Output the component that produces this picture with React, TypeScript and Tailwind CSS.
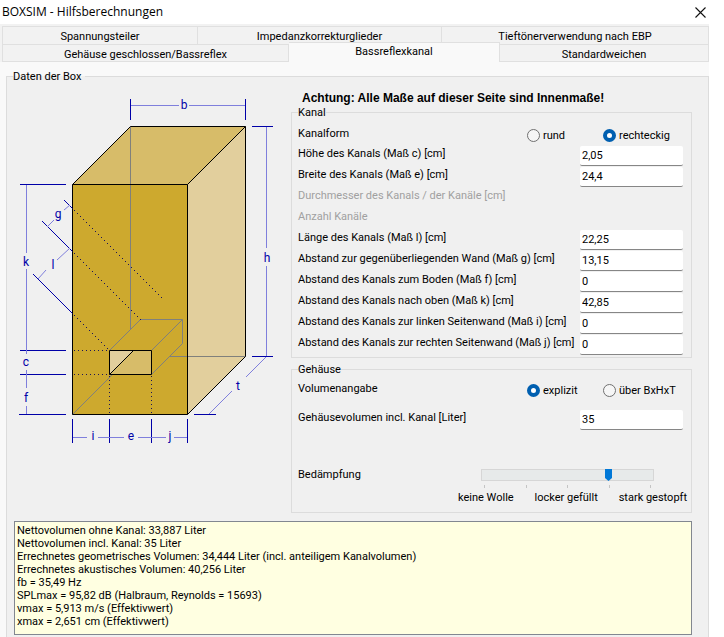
import React, { useState } from "react";
import { clsx } from "clsx";

const channelRows = [
    { id: "c", label: "Höhe des Kanals (Maß c) [cm]", value: "2,05" },
    { id: "e", label: "Breite des Kanals (Maß e) [cm]", value: "24,4" },
    { id: "d", label: "Durchmesser des Kanals / der Kanäle [cm]", value: null },
    { id: "n", label: "Anzahl Kanäle", value: null },
    { id: "l", label: "Länge des Kanals (Maß l) [cm]", value: "22,25" },
    { id: "g", label: "Abstand zur gegenüberliegenden Wand (Maß g) [cm]", value: "13,15" },
    { id: "f", label: "Abstand des Kanals zum Boden (Maß f) [cm]", value: "0" },
    { id: "k", label: "Abstand des Kanals nach oben (Maß k) [cm]", value: "42,85" },
    { id: "i", label: "Abstand des Kanals zur linken Seitenwand (Maß i) [cm]", value: "0" },
    { id: "j", label: "Abstand des Kanals zur rechten Seitenwand (Maß j) [cm]", value: "0" },
];

const results = [
    "Nettovolumen ohne Kanal: 33,887 Liter",
    "Nettovolumen incl. Kanal: 35 Liter",
    "Errechnetes geometrisches Volumen: 34,444 Liter (incl. anteiligem Kanalvolumen)",
    "Errechnetes akustisches Volumen: 40,256 Liter",
    "fb = 35,49 Hz",
    "SPLmax = 95,82 dB (Halbraum, Reynolds = 15693)",
    "vmax = 5,913 m/s (Effektivwert)",
    "xmax = 2,651 cm (Effektivwert)",
];

const letters: [string, number, number][] = [
    ["b", 184, 109],
    ["h", 267, 262],
    ["k", 26, 266],
    ["g", 58, 218],
    ["l", 53, 269],
    ["c", 26, 366],
    ["f", 26, 402],
    ["i", 93, 440],
    ["e", 131, 440],
    ["j", 170, 440],
    ["t", 238, 390],
];

// one pixel dots, three pixels apart on both axes
const dots = (x: number, y: number, count: number) =>
    Array.from({ length: count }, (_, n) => `M${x + n * 3} ${y + n * 3 + 0.5}h1`).join("");

function Tab({ label, className }: { label: string; className?: string }) {
    return (
        <button
            type="button"
            role="tab"
            aria-selected={false}
            className={clsx("h-[18px] border-t border-r border-[#e0e0e0] bg-[#f2f2f2] pt-0.5 text-center", className)}
        >
            {label}
        </button>
    );
}

function Field({ id, value }: { id: string; value: string }) {
    return (
        <input
            id={id}
            type="text"
            defaultValue={value}
            className="mr-1 h-5 w-[103px] shrink-0 rounded-xs border-b border-[#868686] bg-white px-0.5 outline-none"
        />
    );
}

function Radios({ name, options, selected }: { name: string; options: string[]; selected: string }) {
    return (
        <div className="mr-2 grid w-[152px] shrink-0 grid-cols-2">
            {options.map((option) => (
                <label key={option} className="flex items-center gap-[3px] whitespace-nowrap">
                    <input
                        type="radio"
                        name={name}
                        defaultChecked={option === selected}
                        className="size-[13px] shrink-0 appearance-none rounded-full border border-[#707070] bg-[#f6f6f6] checked:border-4 checked:border-[#005fb0] checked:bg-white"
                    />
                    {option}
                </label>
            ))}
        </div>
    );
}

function BoxDiagram() {
    return (
        <svg
            viewBox="13 90 270 360"
            width="270"
            height="360"
            fill="none"
            role="img"
            aria-label="Box"
            className="shrink-0"
        >
            {/* Cabinet */}
            <path d="M72.5 184.5 130.5 126.5H245.5L187.5 184.5Z" fill="#d7bc69" />
            <path d="M187.5 184.5 245.5 126.5V356.5L187.5 414.5Z" fill="#e2cf9d" />
            <path d="M72.5 184.5H187.5V414.5H72.5Z" fill="#cda92e" />

            {/* Hidden edges */}
            <g stroke="#80807c">
                <path d="M130.5 126.5V329.5M169.5 356.5H245.5M72.5 414.5 112 375" />
                <path d="M109.5 350.5 140.5 319.5H182.5V343.5L151.5 374.5M151.5 350.5 182.5 319.5" />
            </g>

            {/* Port opening */}
            <path d="M109.5 350.5H151.5V374.5H109.5Z" fill="#d7bc69" />
            <path d="M109.5 350.5H133.5L109.5 374.5Z" fill="#e2cf9d" />
            <g stroke="#000">
                <path d="M109.5 350.5H151.5V374.5H109.5ZM109.5 374.5 133.5 350.5" />
                <path d="M72.5 184.5H187.5V414.5H72.5ZM72.5 184.5 130.5 126.5H245.5V356.5L187.5 414.5M187.5 184.5 245.5 126.5" />
            </g>

            {/* Guides */}
            <g stroke="#1c1458" shapeRendering="crispEdges">
                <path d="M74 350.5H109M74 374.5H109M109.5 376V414M151.5 376V414" strokeDasharray="1 3" />
                <path d={dots(74, 210, 30) + dots(74, 253, 23) + dots(74, 315, 12)} />
            </g>
            <g stroke="#0000a8">
                <path d="M130.5 99V120M245.5 99V120M252 126.5H273M252 356.5H273M194 414.5H216" />
                <path d="M20 184.5H66M20 350.5H66M20 374.5H66M19 414.5H66" />
                <path d="M72.5 419V443M109.5 419V443M151.5 419V443M187.5 419V443" />
                <path d="M64 200 72.5 208.5M42 221 72.5 251.5M33 274 72.5 313.5" />
            </g>
            <g stroke="#7f7fdc">
                <path d="M131 105.5H179M189 105.5H245M266.5 127V248M266.5 266V356" />
                <path d="M26.5 185V253M26.5 269V354M26.5 370V388M26.5 406V414" />
                <path d="M73 437.5H87M98 437.5H124M138 437.5H166M174 437.5H187" />
                <path d="M70 205 64 210M54 220 47 227M70 248 57 260M46 270 38 279" />
                <path d="M209 414 232 391M246 377 266 357" />
            </g>
            <g fill="#0000a8" textAnchor="middle" className="text-[12px]">
                {letters.map(([letter, x, y]) => (
                    <text key={letter} x={x} y={y}>
                        {letter}
                    </text>
                ))}
            </g>
        </svg>
    );
}

function App() {
    const [damping, setDamping] = useState(3);

    return (
        <div className="min-h-screen bg-white pr-[15px] font-[Roboto,'Liberation_Sans',sans-serif] text-[11px] leading-[13px] text-black">
            {/* Title bar */}
            <header className="flex h-6 items-center justify-between pr-[3px] pl-0.5">
                <h1 className="font-['Open_Sans','Noto_Sans',sans-serif] text-[12px] leading-4">
                    BOXSIM - Hilfsberechnungen
                </h1>
                <button type="button" aria-label="Schließen">
                    <svg viewBox="0 0 11 11" width="11" height="11" stroke="#111" strokeWidth="1.1">
                        <path d="M.5.5 10.5 10.5M10.5.5.5 10.5" />
                    </svg>
                </button>
            </header>

            {/* Tabs */}
            <nav role="tablist" className="bg-[#f2f2f2] pt-0.5 pl-0.5">
                <div className="grid grid-cols-[196fr_244fr_267fr]">
                    <Tab label="Spannungsteiler" className="border-l" />
                    <Tab label="Impedanzkorrekturglieder" />
                    <Tab label="Tieftönerverwendung nach EBP" />
                </div>
                <div className="grid grid-cols-[287fr_211fr_209fr] items-end">
                    <Tab label="Gehäuse geschlossen/Bassreflex" className="border-b border-l" />
                    <button
                        type="button"
                        role="tab"
                        aria-selected
                        className="z-10 -mt-0.5 h-5 border-t border-r border-[#e0e0e0] bg-[#f9f9f9] pb-0.5"
                    >
                        Bassreflexkanal
                    </button>
                    <Tab label="Standardweichen" className="border-b" />
                </div>
            </nav>

            <main className="bg-[#f9f9f9] pt-2 pl-1.5">
                <fieldset className="min-h-[567px] min-w-0 border border-b-0 border-[#dcdcdc] bg-[#f0f0f0] pr-4 pl-1.5">
                    <legend className="pr-1">Daten der Box</legend>
                    <div className="flex gap-2">
                        <div className="pt-[7px]">
                            <BoxDiagram />
                        </div>

                        <div className="min-w-0 flex-1 pt-[7px]">
                            <h2 className="pl-[11px] font-['Liberation_Sans',Arial,sans-serif] text-[12px] leading-4 font-bold">
                                Achtung: Alle Maße auf dieser Seite sind Innenmaße!
                            </h2>

                            <fieldset className="min-w-0 border border-[#dcdcdc] pr-1 pb-0.5 pl-1.5">
                                <legend>Kanal</legend>
                                <div className="flex h-[26px] items-center justify-between pt-1.5">
                                    <span className="pb-1">Kanalform</span>
                                    <Radios name="form" options={["rund", "rechteckig"]} selected="rechteckig" />
                                </div>
                                {channelRows.map(({ id, label, value }) => (
                                    <div key={id} className="flex h-[21px] items-center justify-between">
                                        {value === null ? (
                                            <span className="pb-1 whitespace-nowrap text-[#a0a0a0]">{label}</span>
                                        ) : (
                                            <>
                                                <label htmlFor={id} className="pb-1 whitespace-nowrap">
                                                    {label}
                                                </label>
                                                <Field id={id} value={value} />
                                            </>
                                        )}
                                    </div>
                                ))}
                            </fieldset>

                            <fieldset className="mt-[5px] min-w-0 border border-[#dcdcdc] pr-1 pb-2 pl-1.5">
                                <legend>Gehäuse</legend>
                                <div className="flex h-[25px] items-center justify-between pt-1">
                                    <span className="pb-1">Volumenangabe</span>
                                    <Radios name="volumen" options={["explizit", "über BxHxT"]} selected="explizit" />
                                </div>
                                <div className="mt-2 flex h-[21px] items-center justify-between">
                                    <label htmlFor="volume" className="pb-1">
                                        Gehäusevolumen incl. Kanal [Liter]
                                    </label>
                                    <Field id="volume" value="35" />
                                </div>
                                <div className="mt-[38px] flex items-start justify-between">
                                    <label htmlFor="damping">Bedämpfung</label>
                                    <div className="w-[229px] pt-px">
                                        <div className="mr-[33px] ml-[23px]">
                                            <input
                                                id="damping"
                                                type="range"
                                                min={0}
                                                max={4}
                                                value={damping}
                                                onChange={(e) => setDamping(Number(e.target.value))}
                                                className="block h-3 w-full appearance-none border border-[#d6d6d6] bg-[#e7eaea] [&::-webkit-slider-thumb]:h-3 [&::-webkit-slider-thumb]:w-[7px] [&::-webkit-slider-thumb]:appearance-none [&::-webkit-slider-thumb]:bg-[#0078d7] [&::-webkit-slider-thumb]:[clip-path:polygon(0_0,100%_0,100%_75%,50%_100%,0_75%)]"
                                            />
                                            <div className="mx-[3px] mt-1 flex justify-between">
                                                {[0, 1, 2, 3, 4].map((tick) => (
                                                    <span key={tick} className="h-[3px] w-px bg-[#c4c4c4]" />
                                                ))}
                                            </div>
                                        </div>
                                        <div className="mt-[3px] flex justify-between whitespace-nowrap">
                                            <span>keine Wolle</span>
                                            <span>locker gefüllt</span>
                                            <span>stark gestopft</span>
                                        </div>
                                    </div>
                                </div>
                            </fieldset>
                        </div>
                    </div>

                    {/* Results */}
                    <output className="mt-2 ml-px block min-h-[114px] border border-[#828790] bg-[#ffffe1] px-0.5 pt-0.5">
                        {results.map((line) => (
                            <p key={line}>{line}</p>
                        ))}
                    </output>
                </fieldset>
            </main>
        </div>
    );
}

export default App;
